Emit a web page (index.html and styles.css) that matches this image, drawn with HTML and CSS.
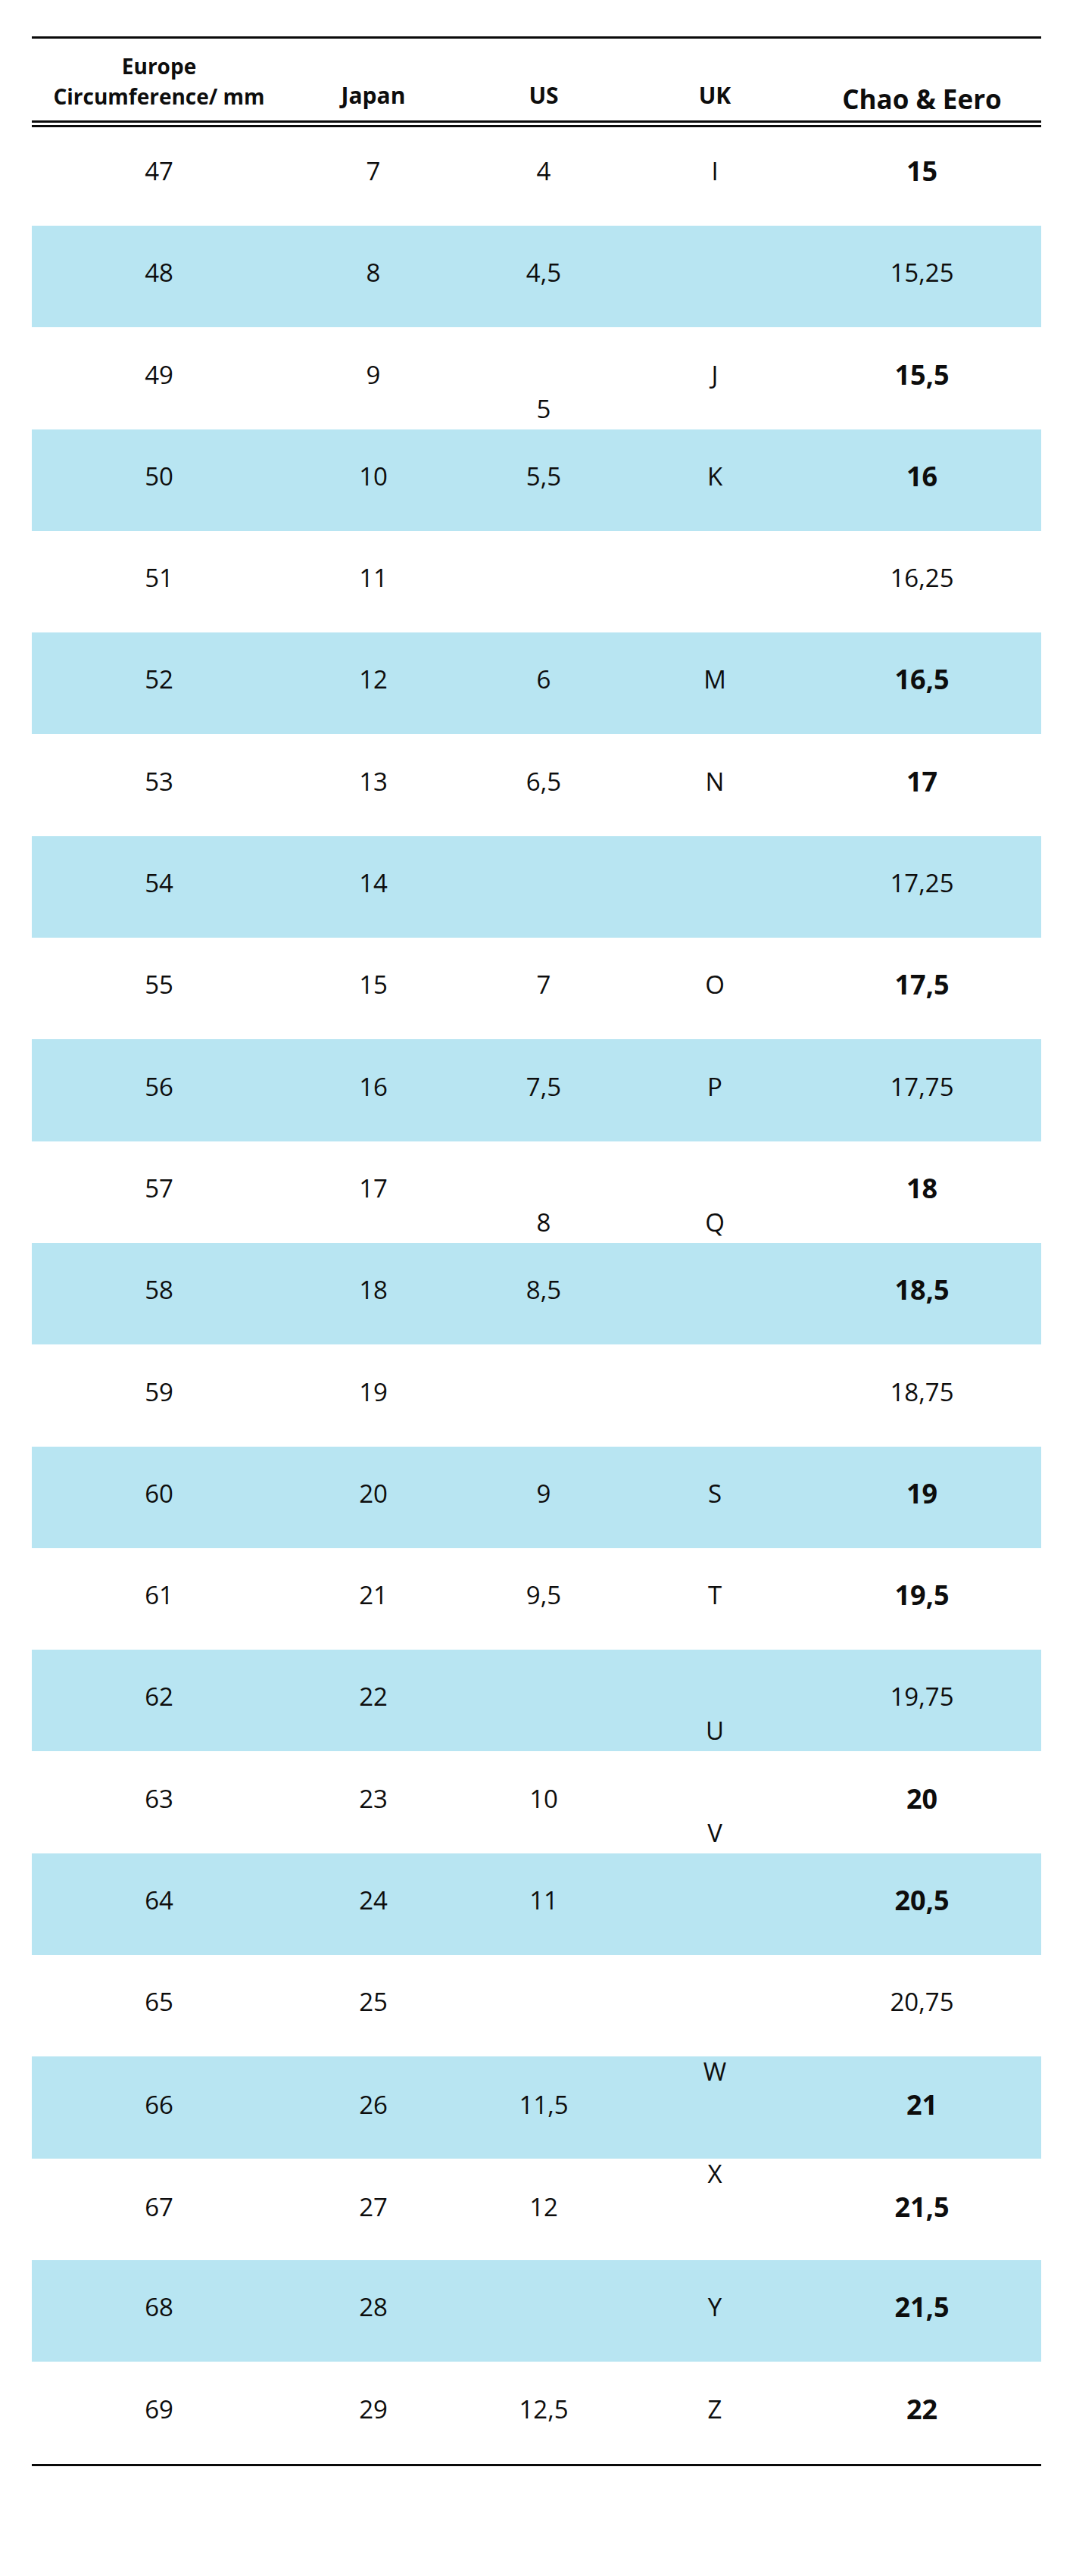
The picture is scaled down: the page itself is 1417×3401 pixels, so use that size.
FILE: index.html
```html
<!DOCTYPE html>
<html lang="en">
<head>
<meta charset="utf-8">
<title>Ring size chart</title>
<link rel="stylesheet" href="styles.css">
</head>
<body>
<div class="sheet">
  <div class="rule-top"></div>
  <div class="row head">
    <div class="cell europe">Europe<br>Circumference/ mm</div>
    <div class="cell">Japan</div>
    <div class="cell">US</div>
    <div class="cell">UK</div>
    <div class="cell brand">Chao &amp; Eero</div>
  </div>
  <div class="rule-double"></div>
  <div class="body">
    <div class="row first"><div class="cell">47</div><div class="cell">7</div><div class="cell">4</div><div class="cell">I</div><div class="cell b">15</div></div>
    <div class="row"><div class="cell">48</div><div class="cell">8</div><div class="cell">4,5</div><div class="cell"></div><div class="cell">15,25</div></div>
    <div class="row"><div class="cell">49</div><div class="cell">9</div><div class="cell lo">5</div><div class="cell">J</div><div class="cell b">15,5</div></div>
    <div class="row"><div class="cell">50</div><div class="cell">10</div><div class="cell">5,5</div><div class="cell">K</div><div class="cell b">16</div></div>
    <div class="row"><div class="cell">51</div><div class="cell">11</div><div class="cell"></div><div class="cell"></div><div class="cell">16,25</div></div>
    <div class="row"><div class="cell">52</div><div class="cell">12</div><div class="cell">6</div><div class="cell">M</div><div class="cell b">16,5</div></div>
    <div class="row"><div class="cell">53</div><div class="cell">13</div><div class="cell">6,5</div><div class="cell">N</div><div class="cell b">17</div></div>
    <div class="row"><div class="cell">54</div><div class="cell">14</div><div class="cell"></div><div class="cell"></div><div class="cell">17,25</div></div>
    <div class="row"><div class="cell">55</div><div class="cell">15</div><div class="cell">7</div><div class="cell">O</div><div class="cell b">17,5</div></div>
    <div class="row"><div class="cell">56</div><div class="cell">16</div><div class="cell">7,5</div><div class="cell">P</div><div class="cell">17,75</div></div>
    <div class="row"><div class="cell">57</div><div class="cell">17</div><div class="cell lo">8</div><div class="cell lo">Q</div><div class="cell b">18</div></div>
    <div class="row"><div class="cell">58</div><div class="cell">18</div><div class="cell">8,5</div><div class="cell"></div><div class="cell b">18,5</div></div>
    <div class="row"><div class="cell">59</div><div class="cell">19</div><div class="cell"></div><div class="cell"></div><div class="cell">18,75</div></div>
    <div class="row"><div class="cell">60</div><div class="cell">20</div><div class="cell">9</div><div class="cell">S</div><div class="cell b">19</div></div>
    <div class="row"><div class="cell">61</div><div class="cell">21</div><div class="cell">9,5</div><div class="cell">T</div><div class="cell b">19,5</div></div>
    <div class="row"><div class="cell">62</div><div class="cell">22</div><div class="cell"></div><div class="cell lo">U</div><div class="cell">19,75</div></div>
    <div class="row"><div class="cell">63</div><div class="cell">23</div><div class="cell">10</div><div class="cell lo">V</div><div class="cell b">20</div></div>
    <div class="row"><div class="cell">64</div><div class="cell">24</div><div class="cell">11</div><div class="cell"></div><div class="cell b">20,5</div></div>
    <div class="row"><div class="cell">65</div><div class="cell">25</div><div class="cell"></div><div class="cell"></div><div class="cell">20,75</div></div>
    <div class="row"><div class="cell">66</div><div class="cell">26</div><div class="cell">11,5</div><div class="cell hi">W</div><div class="cell b">21</div></div>
    <div class="row"><div class="cell">67</div><div class="cell">27</div><div class="cell">12</div><div class="cell hi">X</div><div class="cell b">21,5</div></div>
    <div class="row"><div class="cell">68</div><div class="cell">28</div><div class="cell"></div><div class="cell">Y</div><div class="cell b">21,5</div></div>
    <div class="row"><div class="cell">69</div><div class="cell">29</div><div class="cell">12,5</div><div class="cell">Z</div><div class="cell b">22</div></div>
  </div>
  <div class="rule-bottom"></div>
</div>
</body>
</html>
```
FILE: styles.css
```css
html, body {
  margin: 0;
  padding: 0;
  background: #ffffff;
}

body {
  font-family: "Open Sans", "Noto Sans", sans-serif;
  color: #0d0d0d;
}

.sheet {
  width: 1333px;
  margin: 48px 42px 0;
}

.rule-top,
.rule-bottom {
  height: 3px;
  background: #0a0a0a;
}

.rule-double {
  height: 3px;
  border-top: 3px solid #0a0a0a;
  border-bottom: 3px solid #0a0a0a;
}

.row {
  display: grid;
  grid-template-columns: 336px 230px 220px 232px 315px;
  height: 134.3px;
}

.row.first {
  height: 130px;
}

.body .row:nth-child(even) {
  background: #b8e5f2;
}

.cell {
  display: flex;
  justify-content: center;
  align-items: flex-end;
  text-align: center;
  font-size: 33px;
  line-height: 40px;
  padding-bottom: 52px;
}

.cell.b {
  font-weight: 700;
  font-size: 36px;
}

.cell.lo {
  padding-bottom: 7px;
}

.cell.hi {
  padding-bottom: 96px;
}

.head {
  height: 108px;
}

.head .cell {
  font-weight: 700;
  font-size: 30px;
  line-height: 40px;
  padding-bottom: 13px;
}

.head .cell.europe {
  font-size: 28px;
  padding-bottom: 12px;
}

.head .cell.brand {
  font-size: 35px;
  padding-bottom: 8px;
}
```
